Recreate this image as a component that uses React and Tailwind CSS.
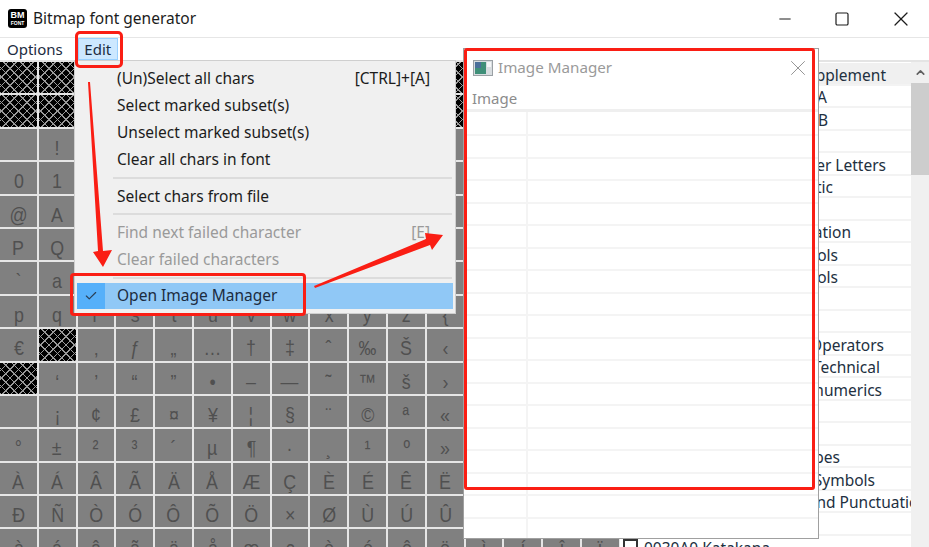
import { X, Check, Minus, Square, ChevronUp } from "lucide-react";

const CHARS =
  " !\"#$%&'()*+,-./" +
  "0123456789:;<=>?" +
  "@ABCDEFGHIJKLMNO" +
  "PQRSTUVWXYZ[\\]^_" +
  "`abcdefghijklmno" +
  "pqrstuvwxyz{|}~\u0000" +
  "€\u0000‚ƒ„…†‡ˆ‰Š‹Œ\u0000Ž\u0000" +
  "\u0000‘’“”•–—˜™š›œ\u0000žŸ" +
  " ¡¢£¤¥¦§¨©ª«¬-®¯" +
  "°±²³´µ¶·¸¹º»¼½¾¿" +
  "ÀÁÂÃÄÅÆÇÈÉÊËÌÍÎÏ" +
  "ÐÑÒÓÔÕÖ×ØÙÚÛÜÝÞß" +
  "àáâãäåæçèéêëìíîï";

const BLOCKS = [
  { name: "000080 Latin-1 Supplement", mr: "mr-[25px]", active: true },
  { name: "000100 Latin Extended A", mr: "mr-[84px]" },
  { name: "000180 Latin Extended B", mr: "mr-[83px]" },
  { name: "" },
  { name: "0002B0 Spacing Modifier Letters", mr: "mr-[25px]" },
  { name: "000370 Greek and Coptic", mr: "mr-[78px]" },
  { name: "" },
  { name: "002000 General Punctuation", mr: "mr-[60px]" },
  { name: "0020A0 Currency Symbols", mr: "mr-[73px]" },
  { name: "002100 Letterlike Symbols", mr: "mr-[73px]" },
  { name: "" },
  { name: "" },
  { name: "002200 Mathematical Operators", mr: "mr-[27px]" },
  { name: "002300 Miscellaneous Technical", mr: "mr-[31px]" },
  { name: "002460 Enclosed Alphanumerics", mr: "mr-[29px]" },
  { name: "" },
  { name: "" },
  { name: "0025A0 Geometric Shapes", mr: "mr-[71px]" },
  { name: "002600 Miscellaneous Symbols", mr: "mr-[36px]" },
  { name: "003000 CJK Symbols and Punctuation", mr: "mr-[-17px]" },
  { name: "" },
];

const MenuItem = ({ label, shortcut, disabled }) => (
  <div className={`flex h-[27.3px] items-center justify-between pl-[42px] pr-[25px] ${disabled ? "text-[#9a9a9a]" : "text-[#1c1c1c]"}`}>
    <span>{label}</span>
    {shortcut && <span>{shortcut}</span>}
  </div>
);

const Separator = () => <div className="my-[3.5px] ml-[38px] mr-[3px] h-[2px] bg-[#dcdcdc]" />;

const CharCell = ({ ch }) => {
  if (ch === "\u0000") {
    return (
      <div className="bg-black bg-[image:repeating-linear-gradient(45deg,#9a9a9a_0_1px,transparent_1px_6px),repeating-linear-gradient(-45deg,#9a9a9a_0_1px,transparent_1px_6px)]" />
    );
  }
  return (
    <div className="overflow-hidden bg-[#808080] text-center font-['Liberation_Sans',sans-serif] text-[21px] leading-[38px] text-[#505050]">
      <span className="inline-block scale-x-[0.85]">{ch}</span>
    </div>
  );
};

const App = () => {
  const cells = [...Array(32).fill("\u0000"), ...CHARS];

  return (
    <div className="relative h-[547px] w-[929px] overflow-hidden bg-white font-['Noto_Sans',sans-serif] text-[15px] text-[#1c1c1c]">
      {/* title bar */}
      <div className="flex h-[38px] items-center border-b border-[#e6e6e6] pl-[8px]">
        <div className="flex h-[19px] w-[19px] flex-col items-center justify-center rounded-[3px] bg-black font-['Liberation_Sans',sans-serif] font-bold leading-none text-white">
          <span className="text-[9px] leading-[9px]">BM</span>
          <span className="text-[5px] leading-[6px]">FONT</span>
        </div>
        <span className="ml-[6px] text-[15.5px]">Bitmap font generator</span>
        <div className="ml-auto flex items-center">
          <Minus size={18} strokeWidth={1} absoluteStrokeWidth className="mr-[40px]" />
          <Square size={16} strokeWidth={1.2} absoluteStrokeWidth className="mr-[39px]" />
          <X size={24} strokeWidth={1.2} absoluteStrokeWidth className="mr-[16px]" />
        </div>
      </div>

      {/* menu bar */}
      <div className="flex h-[22px] items-center text-[15px] text-[#1c2c40]">
        <span className="px-[7px]">Options</span>
        <span className="ml-[8px] flex h-[22px] w-[40px] items-center justify-center border border-[#99d1ff] bg-[#cce8ff]">Edit</span>
      </div>

      <div className="flex h-[487px] border-t-2 border-[#e4e4e4]">
        {/* character grid */}
        <div className="grid w-[620px] shrink-0 grid-cols-[repeat(16,36.8px)] auto-rows-[31.4px] gap-[2px] bg-[#e6e6e6]">
          {cells.map((ch, i) => (
            <CharCell key={i} ch={ch} />
          ))}
        </div>

        {/* unicode blocks */}
        <div className="min-w-0 flex-1 overflow-hidden pt-px text-[15.5px] text-[#22303f]">
          {BLOCKS.map((b, i) => (
            <div
              key={i}
              className={`flex h-[22.5px] items-center justify-end whitespace-nowrap border-b-2 border-[#f3f3f3] pt-[4px] ${b.active ? "bg-[#f0f0f0]" : ""}`}
            >
              <span className={b.mr}>{b.name}</span>
            </div>
          ))}
          <div className="flex h-[22.5px] items-center whitespace-nowrap pl-[3px]">
            <span className="h-[15px] w-[15px] border-2 border-[#333] bg-white" />
            <span className="ml-[6px] pt-[4px]">0030A0 Katakana</span>
          </div>
        </div>

        {/* scrollbar */}
        <div className="flex w-[18px] shrink-0 flex-col items-center bg-[#f0f0f0]">
          <ChevronUp size={13} strokeWidth={3} className="mt-[4px] mb-[4px] text-[#606060]" />
          <div className="h-[92px] w-full bg-[#cdcdcd]" />
        </div>
      </div>

      {/* edit menu */}
      <div className="absolute left-[74px] top-[60px] h-[254px] w-[382px] border border-[#cfcfcf] bg-[#f0f0f0] pt-[3.5px] text-[15.5px]">
        <MenuItem label="(Un)Select all chars" shortcut="[CTRL]+[A]" />
        <MenuItem label="Select marked subset(s)" />
        <MenuItem label="Unselect marked subset(s)" />
        <MenuItem label="Clear all chars in font" />
        <Separator />
        <MenuItem label="Select chars from file" />
        <Separator />
        <MenuItem label="Find next failed character" shortcut="[E]" disabled />
        <MenuItem label="Clear failed characters" disabled />
        <Separator />
        <div className="ml-[2px] mr-[2px] mt-[1px] flex h-[26px] items-center bg-[#90c8f6] text-[#1c2c40]">
          <span className="flex h-full w-[28px] items-center justify-center bg-[#56b0fa]">
            <Check size={14} strokeWidth={2} className="text-[#2b3f55]" />
          </span>
          <span className="ml-[12px]">Open Image Manager</span>
        </div>
      </div>

      {/* image manager dialog */}
      <div className="absolute left-[463px] top-[48px] flex h-[491px] w-[356px] flex-col border border-[#a0a0a0] bg-white">
        <div className="flex h-[37px] shrink-0 items-center pl-[9px] pr-[7px] text-[#9a9a9a]">
          <svg width="20" height="16" viewBox="0 0 20 16" className="shrink-0">
            <rect x="0.5" y="0.5" width="19" height="15" fill="#d8dde0" stroke="#9aa0a4" />
            <rect x="2" y="2" width="11" height="12" fill="#3f8f78" />
            <rect x="2" y="2" width="6" height="6" fill="#4a6f9a" />
            <rect x="14" y="2" width="4" height="5" fill="#f4f6f7" />
          </svg>
          <span className="ml-[5px] text-[15.2px]">Image Manager</span>
          <X size={26} strokeWidth={0.9} absoluteStrokeWidth className="ml-auto text-[#8a8a8a]" />
        </div>
        <div className="h-[26px] shrink-0 border-b-[3px] border-[#efefef] pl-[8px] text-[15px] leading-[24px] text-[#8c8c8c]">Image</div>
        <div className="relative min-h-0 flex-1 overflow-hidden">
          <div className="h-[24px] border-b-2 border-[#f4f4f4]" />
          {Array.from({ length: 18 }).map((_, i) => (
            <div key={i} className="h-[22.5px] border-b-2 border-[#f4f4f4]" />
          ))}
          <div className="absolute bottom-0 left-[62px] top-0 w-[2px] bg-[#f4f4f4]" />
        </div>
      </div>

      {/* red annotations */}
      <div className="absolute left-[75px] top-[31px] h-[37px] w-[48px] rounded-[5px] border-[3px] border-[#fa1e14]" />
      <div className="absolute left-[70px] top-[273px] h-[43px] w-[236px] rounded-[4px] border-[3px] border-[#fa1e14]" />
      <div className="absolute left-[464px] top-[48px] h-[442px] w-[351px] rounded-[3px] border-[3px] border-[#fa1e14]" />
      <svg className="pointer-events-none absolute left-0 top-0" width="929" height="547" viewBox="0 0 929 547">
        <polygon points="88,82 90,82 103,251 112,250 103,267 93,252 98,251" fill="#fa1e14" />
        <polygon points="314,286 426,239 425,233 443,235 432,250 430,245 315,288" fill="#fa1e14" />
      </svg>
    </div>
  );
};

export default App;
